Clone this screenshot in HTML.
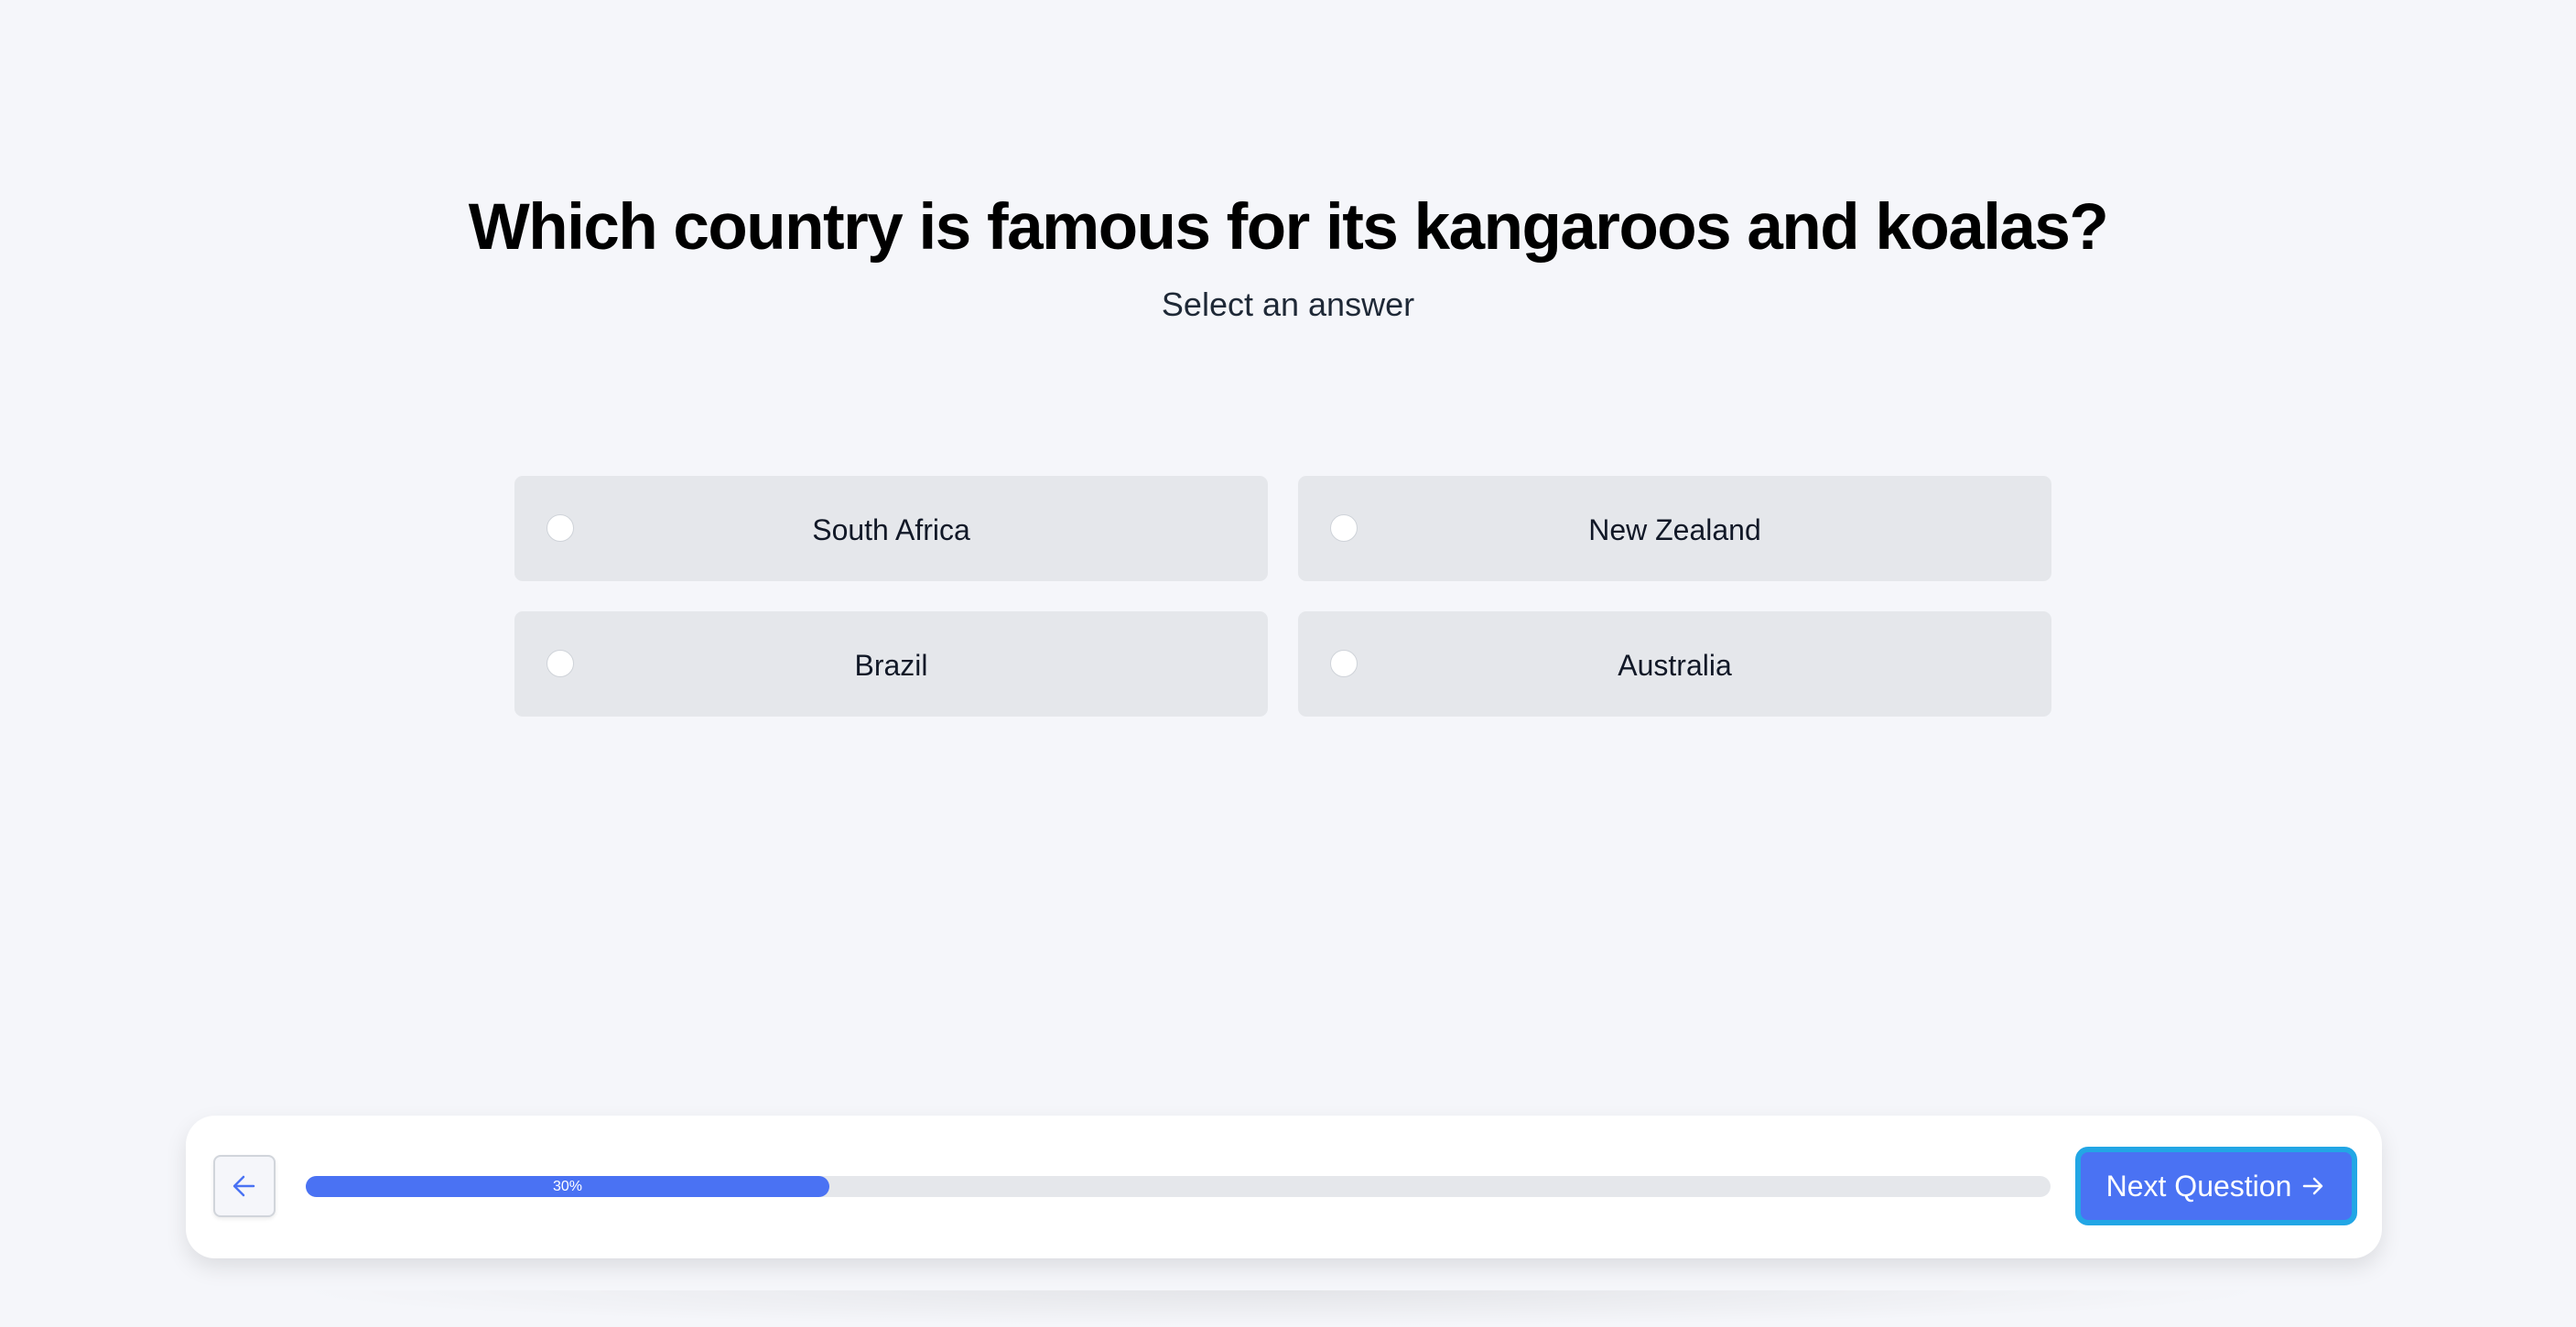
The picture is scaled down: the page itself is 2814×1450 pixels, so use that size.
<!DOCTYPE html>
<html><head><meta charset="utf-8"><style>
*{box-sizing:border-box;margin:0;padding:0}
body{width:2814px;height:1426px;background:#f5f6fa;font-family:"Liberation Sans",sans-serif;position:relative;overflow:hidden}
h1{position:absolute;top:208px;left:0;width:2814px;text-align:center;font-size:71px;font-weight:bold;color:#000;letter-spacing:-1.5px}
.sub{position:absolute;top:312px;left:0;width:2814px;text-align:center;font-size:36px;color:#1f2937}
.card{position:absolute;width:823px;height:115px;background:#e5e7eb;border-radius:9px;font-size:32px;color:#111827;display:flex;align-items:center;justify-content:center;padding-top:3px;font-weight:500}
.card i{position:absolute;left:35px;top:42px;width:30px;height:30px;border-radius:50%;background:#fff;border:1.5px solid #cfd3d9}
.bar{position:absolute;left:203px;top:1219px;width:2399px;height:156px;background:#fff;border-radius:32px;box-shadow:0 10px 24px rgba(0,0,0,.10)}
.back{position:absolute;left:233px;top:1262px;width:68px;height:68px;background:#f5f6fa;border:2px solid #d1d5db;border-radius:8px;box-shadow:0 2px 4px rgba(0,0,0,.08)}
.track{position:absolute;left:334px;top:1285px;width:1906px;height:23px;background:#e5e7eb;border-radius:12px}
.fill{position:absolute;left:0;top:0;width:572px;height:23px;background:#4a72f3;border-radius:12px;color:#fff;font-size:16px;text-align:center;line-height:23px}
.next{position:absolute;left:2267px;top:1253px;width:308px;height:86px;background:#4a72f3;border:6px solid #22a6e5;border-radius:14px;color:#fff;font-size:32px;display:flex;align-items:center;justify-content:center;gap:10px}
.shade{position:absolute;left:300px;top:1410px;width:2200px;height:40px;background:radial-gradient(ellipse at center top,rgba(0,0,0,.07),rgba(0,0,0,0) 70%)}
</style></head><body>
<h1>Which country is famous for its kangaroos and koalas?</h1>
<div class="sub">Select an answer</div>
<div class="card" style="left:562px;top:520px"><i></i>South Africa</div>
<div class="card" style="left:1418px;top:520px"><i></i>New Zealand</div>
<div class="card" style="left:562px;top:668px"><i></i>Brazil</div>
<div class="card" style="left:1418px;top:668px"><i></i>Australia</div>
<div class="shade"></div>
<div class="bar"></div>
<div class="back"><svg width="64" height="64" viewBox="0 0 64 64" style="position:absolute;left:0;top:0"><path d="M42 32H22M31 22L21 32L31 42" fill="none" stroke="#4a72f3" stroke-width="2.5" stroke-linecap="round" stroke-linejoin="round"/></svg></div>
<div class="track"><div class="fill">30%</div></div>
<div class="next">Next Question <svg width="28" height="28" viewBox="0 0 28 28"><path d="M4 14H23M15 6L23 14L15 22" fill="none" stroke="#fff" stroke-width="2.5" stroke-linecap="round" stroke-linejoin="round"/></svg></div>
</body></html>
